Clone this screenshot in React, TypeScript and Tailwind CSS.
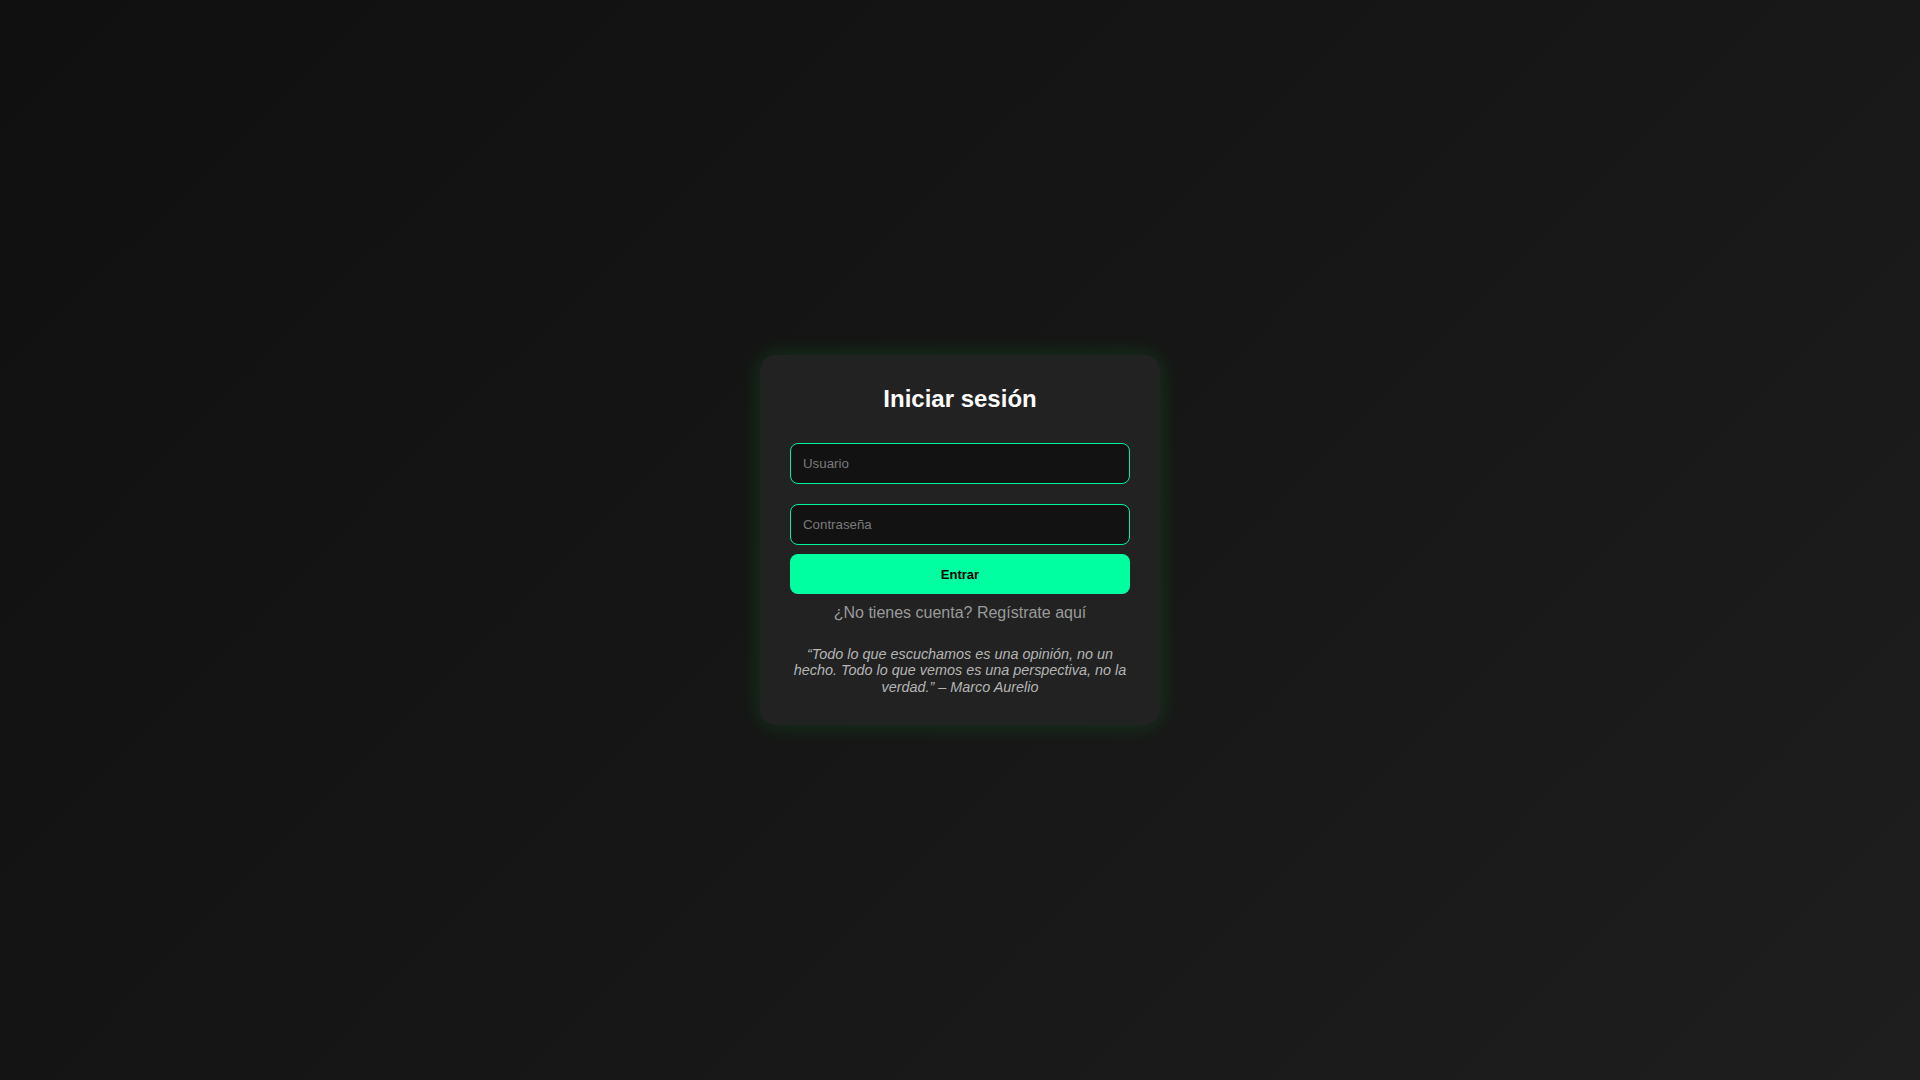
import React from "react";

export default function App() {
  return (
    <div
      className="w-full h-[1080px] flex items-center justify-center bg-[linear-gradient(135deg,#101010_0%,#161616_50%,#1e1e1e_100%)]"
      style={{ fontFamily: '"Liberation Sans", Arial, sans-serif' }}
    >
      <div className="w-[400px] rounded-[15px] bg-[#222222] px-[30px] pt-[30px] pb-[30px] shadow-[0_0_22px_rgba(0,255,60,0.14)] flex flex-col items-stretch">
        <h2 className="text-[24px] leading-[27.6px] font-bold text-white text-center m-0">
          Iniciar sesión
        </h2>
        <input
          type="text"
          placeholder="Usuario"
          className="mt-[31px] h-[41px] w-full rounded-[8px] border border-[#00f59a] bg-[#121212] px-3 text-[13.3px] text-white placeholder:text-[#7a7a7a] outline-none"
        />
        <input
          type="password"
          placeholder="Contraseña"
          className="mt-[20px] h-[41px] w-full rounded-[8px] border border-[#00f59a] bg-[#121212] px-3 text-[13.3px] text-white placeholder:text-[#7a7a7a] outline-none"
        />
        <button className="mt-[9px] h-[40px] w-full rounded-[8px] bg-[#00ffa0] text-[13px] font-bold text-black">
          Entrar
        </button>
        <p className="mt-[10px] text-[16px] leading-[18.4px] text-[#9a9a9a] text-center">
          ¿No tienes cuenta? Regístrate aquí
        </p>
        <p className="mt-[23px] text-[14.4px] leading-[16.5px] italic text-[#b5b5b5] text-center">
          “Todo lo que escuchamos es una opinión, no un hecho. Todo lo que vemos es una perspectiva, no la verdad.” – Marco Aurelio
        </p>
      </div>
    </div>
  );
}
